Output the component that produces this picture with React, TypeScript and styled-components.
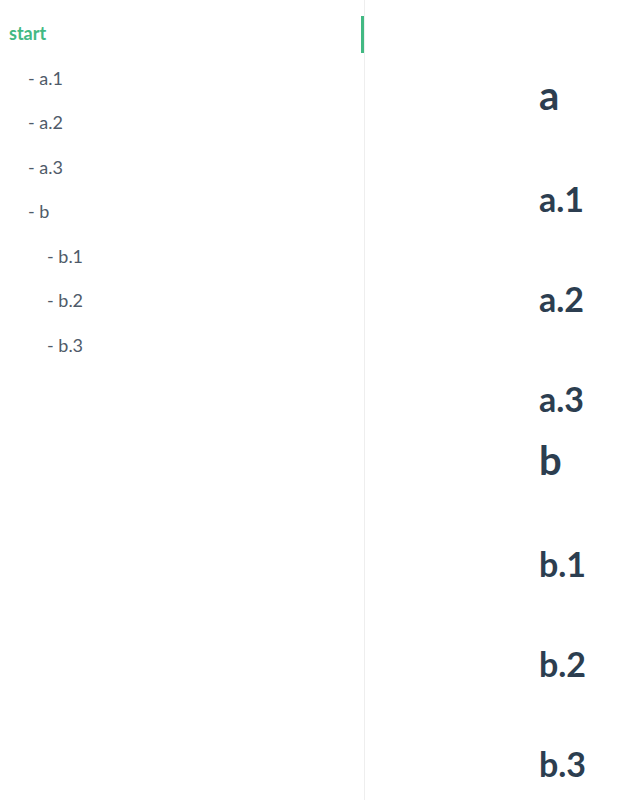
import styled, { createGlobalStyle } from "styled-components";

const GlobalStyle = createGlobalStyle`
  html, body {
    margin: 0;
    padding: 0;
    background: #fff;
  }
  body {
    font-family: Lato, "Noto Sans", "Liberation Sans", sans-serif;
    -webkit-font-smoothing: antialiased;
  }
`;

const Layout = styled.div`
  display: flex;
  height: 100vh;
  overflow: hidden;
`;

const Sidebar = styled.aside`
  width: 364px;
  flex-shrink: 0;
  border-right: 1px solid #eee;
  padding-top: 16px;
  box-sizing: content-box;
`;

const NavList = styled.ul`
  list-style: none;
  margin: 0;
  padding: 0;
  display: flex;
  flex-direction: column;
  gap: 7.5px;
`;

const NavItem = styled.li`
  display: block;
`;

const NavLink = styled.a<{ $depth: number; $active?: boolean }>`
  display: block;
  height: 37px;
  box-sizing: border-box;
  padding: 0 0 3px ${(p) => 9 + p.$depth * 19}px;
  line-height: 34px;
  font-size: 18px;
  font-weight: ${(p) => (p.$active ? 700 : 400)};
  color: ${(p) => (p.$active ? "#42b983" : "#4f5b69")};
  text-decoration: none;
  border-right: 3px solid ${(p) => (p.$active ? "#42b983" : "transparent")};
  cursor: pointer;
`;

const Content = styled.main`
  flex: 1;
  padding: 54px 0 0 174px;
  display: flex;
  flex-direction: column;
  color: #2c3e50;
`;

const Title = styled.h1`
  margin: 17px 0 2px;
  font-size: 40px;
  line-height: 48px;
  font-weight: 700;
`;

const SubTitle = styled.h2`
  margin: 60px 0 0;
  font-size: 34px;
  line-height: 40px;
  font-weight: 700;
`;

interface INavEntry {
  label: string;
  depth: number;
  active?: boolean;
}

const nav: INavEntry[] = [
  { label: "start", depth: 0, active: true },
  { label: "- a.1", depth: 1 },
  { label: "- a.2", depth: 1 },
  { label: "- a.3", depth: 1 },
  { label: "- b", depth: 1 },
  { label: "- b.1", depth: 2 },
  { label: "- b.2", depth: 2 },
  { label: "- b.3", depth: 2 },
];

const sections = [
  { title: "a", subs: ["a.1", "a.2", "a.3"] },
  { title: "b", subs: ["b.1", "b.2", "b.3"] },
];

function App() {
  return (
    <>
      <GlobalStyle />
      <Layout>
        <Sidebar>
          <NavList>
            {nav.map((item) => (
              <NavItem key={item.label}>
                <NavLink $depth={item.depth} $active={item.active}>
                  {item.label}
                </NavLink>
              </NavItem>
            ))}
          </NavList>
        </Sidebar>
        <Content>
          {sections.map((section) => (
            <section key={section.title}>
              <Title>{section.title}</Title>
              {section.subs.map((sub) => (
                <SubTitle key={sub}>{sub}</SubTitle>
              ))}
            </section>
          ))}
        </Content>
      </Layout>
    </>
  );
}

export default App;
